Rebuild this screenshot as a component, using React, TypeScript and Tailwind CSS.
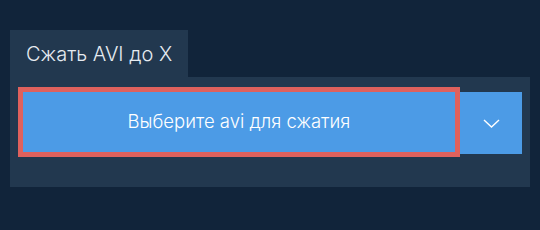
import React from 'react';

const ChevronDown = () => (
  <svg width="17" height="9" viewBox="0 0 17 9" fill="none">
    <path d="M1 1l7.5 7L16 1" stroke="white" strokeWidth="1.4" />
  </svg>
);

export default function App() {
  return (
    <div className="w-[540px] h-[230px] bg-[#11243a] pt-[30px] px-[10px] font-['Inter','Noto_Sans',sans-serif] font-light">
      <div className="w-[178px] h-[47px] bg-[#22384f] flex items-center pl-[16px] text-[20px] text-[#e6ebf1]">
        Сжать AVI до X
      </div>
      <div className="w-[520px] h-[110px] bg-[#22384f] pl-[8px] pt-[10px] flex items-start">
        <button className="w-[442px] h-[70px] border-[5px] border-[#df615d] bg-[#4c9be6] text-white text-[18.5px] font-light flex items-center justify-center">
          Выберите avi для сжатия
        </button>
        <button className="w-[62px] h-[62px] mt-[5px] bg-[#4c9be6] flex items-center justify-center">
          <ChevronDown />
        </button>
      </div>
    </div>
  );
}
